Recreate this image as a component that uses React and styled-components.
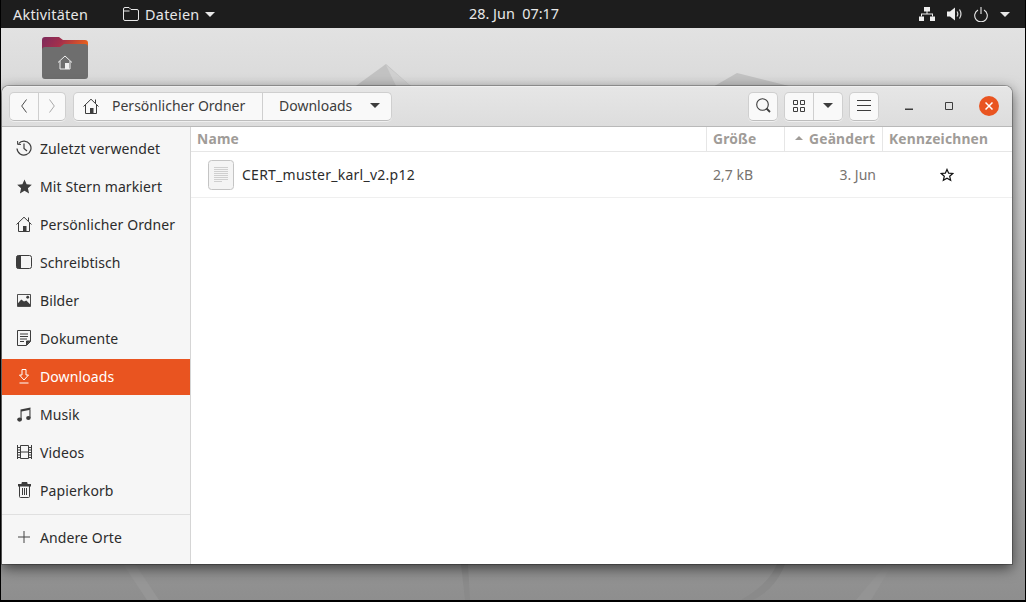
import React from 'react';
import styled, { createGlobalStyle } from 'styled-components';

const GlobalStyle = createGlobalStyle`
  html, body {
    margin: 0;
    padding: 0;
    background: #000;
  }
  * {
    box-sizing: border-box;
  }
  body {
    font-family: "Noto Sans", "Open Sans", sans-serif;
    overflow: hidden;
  }
`;

const Screen = styled.div`
  width: 1026px;
  height: 602px;
  display: flex;
  flex-direction: column;
  background: #000;
  padding: 0 1px 2px;
`;

const TopBar = styled.div`
  height: 28px;
  flex: none;
  display: flex;
  align-items: center;
  background: #1d1d1d;
  color: #e8e8e8;
  font-size: 14.4px;
  position: relative;
  padding: 0 15px 0 12px;
`;

const TopItem = styled.div`
  display: flex;
  align-items: center;
  gap: 6px;
  letter-spacing: 0.25px;
  margin-left: ${p => p.$ml || 0}px;
`;

const Clocks = styled.div`
  position: absolute;
  left: 468px;
  top: 0;
  height: 28px;
  line-height: 28px;
  white-space: pre;
`;

const Tray = styled.div`
  margin-left: auto;
  display: flex;
  align-items: center;
  gap: 12px;
`;

const Caret = styled.span`
  display: inline-block;
  width: 0;
  height: 0;
  border-left: ${p => p.$size || 5}px solid transparent;
  border-right: ${p => p.$size || 5}px solid transparent;
  border-top: ${p => p.$size || 5}px solid ${p => p.$color || 'currentColor'};
`;

const UpCaret = styled(Caret)`
  transform: rotate(180deg);
`;

const Desktop = styled.div`
  flex: 1;
  position: relative;
  overflow: hidden;
  background: linear-gradient(180deg, #e2e2e2 0%, #d9d9d9 11%, #b2b2b2 60%, #8e8e8e 100%);
`;

const Wallpaper = styled.svg`
  position: absolute;
  inset: 0;
  width: 100%;
  height: 100%;
`;

const DesktopIcon = styled.div`
  position: absolute;
  left: 41px;
  top: 9px;
  width: 46px;
  height: 42px;
`;

const Window = styled.div`
  position: absolute;
  left: 1px;
  top: 58px;
  width: 1010px;
  height: 478px;
  display: flex;
  flex-direction: column;
  border-radius: 7px 7px 0 0;
  overflow: hidden;
  background: #fff;
  box-shadow: 0 4px 14px rgba(0, 0, 0, 0.6), 0 0 0 1px rgba(0, 0, 0, 0.25);
`;

const HeaderBar = styled.div`
  height: 41px;
  flex: none;
  display: flex;
  align-items: center;
  padding: 0 0 1px 7px;
  background: linear-gradient(180deg, #e6e6e6, #dddddd);
  border-top: 1px solid #f0f0f0;
  border-bottom: 1px solid #b9b9b9;
`;

const ButtonGroup = styled.div`
  display: flex;
  height: 29px;
  margin-left: ${p => p.$ml || 0}px;
  background: #f9f9f9;
  border: 1px solid #cfcfcf;
  border-bottom-color: #bdbdbd;
  border-radius: 5px;
  box-shadow: 0 1px 0 rgba(255, 255, 255, 0.5);
`;

const GroupCell = styled.div`
  width: ${p => p.$w}px;
  display: flex;
  align-items: center;
  justify-content: ${p => p.$align || 'center'};
  gap: ${p => p.$gap || 0}px;
  padding-left: ${p => p.$pl || 0}px;
  padding-bottom: 1px;
  font-size: 14px;
  color: #3d3d3d;
  & + & {
    border-left: 1px solid #cfcfcf;
  }
`;

const WindowControl = styled.div`
  width: 20px;
  height: 20px;
  display: flex;
  align-items: center;
  justify-content: center;
  border-radius: 50%;
  margin-left: 20px;
  background: ${p => p.$close ? '#e95420' : 'transparent'};
`;

const Body = styled.div`
  flex: 1;
  display: flex;
  min-height: 0;
`;

const Sidebar = styled.nav`
  width: 189px;
  flex: none;
  display: flex;
  flex-direction: column;
  background: #f6f6f6;
  border-right: 1px solid #d5d5d5;
  padding-top: 2px;
`;

const Place = styled.div`
  height: ${p => p.$active ? 36 : 38}px;
  margin-top: ${p => p.$active ? 2 : 0}px;
  padding-bottom: ${p => p.$active ? 2 : 0}px;
  display: flex;
  align-items: center;
  gap: 8px;
  padding-left: 14px;
  font-size: 14px;
  letter-spacing: 0.1px;
  color: ${p => p.$active ? '#fff' : '#2c2c2c'};
  background: ${p => p.$active ? '#e95420' : 'transparent'};
`;

const PlaceIcon = styled.span`
  width: 16px;
  height: 18px;
  display: flex;
  align-items: center;
  justify-content: center;
`;

const SidebarRule = styled.div`
  height: 1px;
  background: #e0e0e0;
  margin-top: 5px;
  margin-bottom: 3px;
`;

const Content = styled.main`
  flex: 1;
  display: flex;
  flex-direction: column;
  min-width: 0;
  background: #fff;
`;

const COLUMNS = '515px 78px 98px 1fr';

const ColumnHeader = styled.div`
  height: 25px;
  flex: none;
  display: grid;
  grid-template-columns: ${COLUMNS};
  border-bottom: 1px solid #e6e6e6;
`;

const ColumnTitle = styled.div`
  display: flex;
  align-items: center;
  gap: 6px;
  padding: 0 0 2px ${p => p.$arrow ? 10 : 6}px;
  font-size: 13.8px;
  font-weight: 700;
  letter-spacing: 0.2px;
  color: #a09c98;
  white-space: nowrap;
  & + & {
    border-left: 1px solid #e6e6e6;
  }
`;

const FileRow = styled.div`
  height: 46px;
  flex: none;
  display: grid;
  grid-template-columns: ${COLUMNS};
  align-items: center;
  border-bottom: 1px solid #efefef;
  font-size: 14px;
`;

const FileName = styled.div`
  display: flex;
  align-items: center;
  gap: 8px;
  padding-left: 17px;
  letter-spacing: 0.25px;
  color: #2c2c2c;
`;

const FileMeta = styled.div`
  color: #77736f;
  padding: 0 6px 0 7px;
  text-align: ${p => p.$right ? 'right' : 'left'};
`;

const StarCell = styled.div`
  display: flex;
  justify-content: center;
  padding-right: 1px;
`;

const FileIcon = () => (
  <svg width="26" height="30" viewBox="0 0 26 30">
    <rect x="0.5" y="0.5" width="25" height="29" rx="3" fill="#f4f4f4" stroke="#c4c4c4" />
    <path d="M6 7.5h14M6 9.5h14M6 11.5h14M6 13.5h14M6 15.5h14M6 17.5h14M6 19.5h14M6 21.5h8" stroke="#cfcfcf" />
  </svg>
);

const FolderOutline = () => (
  <svg width="16" height="14" viewBox="0 0 16 14" fill="none" stroke="#e8e8e8">
    <path d="M2 0.5h4l2 2h6a1.5 1.5 0 0 1 1.5 1.5v8a1.5 1.5 0 0 1-1.5 1.5H2A1.5 1.5 0 0 1 0.5 12V2A1.5 1.5 0 0 1 2 0.5zM0.5 4h6" />
  </svg>
);

const NetworkIcon = () => (
  <svg width="16" height="14" viewBox="0 0 16 14" fill="#eee">
    <rect x="5" y="0" width="6" height="4.5" />
    <rect x="0" y="9.5" width="5" height="4.5" />
    <rect x="11" y="9.5" width="5" height="4.5" />
    <path d="M7.5 4h1v2.5h5.5v3h-1v-2H3v2H2v-3h5.5z" />
  </svg>
);

const VolumeIcon = () => (
  <svg width="15" height="14" viewBox="0 0 15 14">
    <path d="M0 4.5h3L8 0.5v13l-5-4H0z" fill="#eee" />
    <path d="M10 4.5c1 1.5 1 3.5 0 5M12.5 2.5c1.8 2.8 1.8 6.2 0 9" fill="none" stroke="#ddd" strokeWidth="1.2" />
  </svg>
);

const PowerIcon = () => (
  <svg width="14" height="15" viewBox="0 0 14 15" fill="none" stroke="#e8e8e8" strokeWidth="1.1">
    <path d="M4 3a6.3 6.3 0 1 0 6 0M7 0v7" />
  </svg>
);

const ClockIcon = () => (
  <svg width="16" height="16" viewBox="0 0 16 16" fill="none" stroke="#3d3d3d" strokeWidth="1.2">
    <path d="M2.6 3.6A7 7 0 1 1 1 8.5" />
    <path d="M1.6 1v3.4H5" strokeWidth="1" />
    <path d="M8 3.5V8.5l3 2.5" />
  </svg>
);

const StarIcon = () => (
  <svg width="15" height="15" viewBox="0 0 15 15" fill="#3d3d3d">
    <path d="M7.5 0.5l2.1 4.8 5.2 0.5-3.9 3.5 1.2 5.1-4.6-2.7-4.6 2.7 1.2-5.1L0.2 5.8l5.2-0.5z" />
  </svg>
);

const OutlineStar = () => (
  <svg width="14" height="14" viewBox="0 0 15 15" fill="none" stroke="#111" strokeWidth="1.3">
    <path d="M7.5 1.5l1.8 4 4.4 0.4-3.3 3 1 4.3-3.9-2.3-3.9 2.3 1-4.3-3.3-3 4.4-0.4z" />
  </svg>
);

const HomeIcon = () => (
  <svg width="16" height="16" viewBox="0 0 16 16" fill="none" stroke="#3d3d3d">
    <path d="M0.5 8.5L8 1.2l7.5 7.3M2.5 7v8.5h11V7M12.5 1.5v3.5" />
    <path d="M7 10h3.5v5.5H7z" fill="#3d3d3d" stroke="none" />
  </svg>
);

const DesktopPlaceIcon = () => (
  <svg width="16" height="14" viewBox="0 0 16 14">
    <rect x="0.5" y="0.5" width="15" height="13" rx="2" fill="none" stroke="#3d3d3d" />
    <path d="M2 0.5h3v13H2a1.5 1.5 0 0 1-1.5-1.5V2A1.5 1.5 0 0 1 2 0.5z" fill="#3d3d3d" />
  </svg>
);

const ImageIcon = () => (
  <svg width="14" height="13" viewBox="0 0 15 14">
    <path d="M0.5 0.5h14v13H0.5z" fill="none" stroke="#3d3d3d" />
    <path d="M1 13v-3l3.5-4 3 2 2.5-1 4 4v2z" fill="#3d3d3d" />
    <circle cx="11.5" cy="3.5" r="1.5" fill="#3d3d3d" />
  </svg>
);

const DocumentIcon = () => (
  <svg width="14" height="16" viewBox="0 0 14 16" fill="none" stroke="#3d3d3d">
    <path d="M0.5 0.5h13v11l-4 4h-9z" />
    <path d="M3 4h8M3 6.5h8M3 9h7M3 11.5h4" />
    <path d="M9.5 15v-4h4" fill="#3d3d3d" />
  </svg>
);

const DownloadIcon = () => (
  <svg width="10" height="15" viewBox="0 0 10 15" fill="none" stroke="#fff">
    <path d="M3 0.5h4v5.5h2.5l-4.5 5-4.5-5H3z" />
    <path d="M0.5 14h9" />
  </svg>
);

const MusicIcon = () => (
  <svg width="14" height="15" viewBox="0 0 14 15" fill="#3d3d3d">
    <path d="M3.5 2.5L13.5 0.5v2.2L4.6 4.5V12.5H3.5zM12.4 1.5h1.1v9.5h-1.1z" />
    <ellipse cx="2.6" cy="12.6" rx="2.4" ry="2.1" />
    <ellipse cx="11.4" cy="11" rx="2.3" ry="2.1" />
  </svg>
);

const FilmIcon = () => (
  <svg width="15" height="14" viewBox="0 0 15 14" fill="none" stroke="#3d3d3d">
    <path d="M3.5 0.5h8v13h-8zM3.5 7h8" />
    <path d="M0.5 0v14M14.5 0v14" strokeWidth="1" />
    <path d="M0 2.5h3M0 5h3M0 7.5h3M0 10h3M0 12.5h3M12 2.5h3M12 5h3M12 7.5h3M12 10h3M12 12.5h3" />
  </svg>
);

const TrashIcon = () => (
  <svg width="13" height="16" viewBox="0 0 13 16" fill="none" stroke="#3d3d3d">
    <path d="M1.5 3.5v11a1 1 0 0 0 1 1h8a1 1 0 0 0 1-1v-11" />
    <path d="M0 2.5h13v1.5H0zM4 2V0.5h5V2" fill="#3d3d3d" strokeWidth="1" />
    <path d="M4.5 6v7M6.5 6v7M8.5 6v7" />
  </svg>
);

const PlusIcon = () => (
  <svg width="12" height="12" viewBox="0 0 12 12" stroke="#444">
    <path d="M6 0v12M0 6h12" />
  </svg>
);

const BackIcon = ({ color }) => (
  <svg width="6" height="14" viewBox="0 0 6 14" fill="none" stroke={color}>
    <path d="M5.5 0.5L0.7 7l4.8 6.5" />
  </svg>
);

const ForwardIcon = ({ color }) => (
  <svg width="6" height="14" viewBox="0 0 6 14" fill="none" stroke={color}>
    <path d="M0.5 0.5L5.3 7l-4.8 6.5" />
  </svg>
);

const SearchIcon = () => (
  <svg width="15" height="15" viewBox="0 0 15 15" fill="none" stroke="#3d3d3d">
    <circle cx="6.5" cy="6.5" r="5.8" strokeWidth="1.1" />
    <path d="M10.5 10.5L14 14" strokeWidth="1.8" />
  </svg>
);

const GridIcon = () => (
  <svg width="12" height="12" viewBox="0 0 12 12" fill="none" stroke="#3d3d3d">
    <path d="M0.5 0.5h4v4h-4zM7.5 0.5h4v4h-4zM0.5 7.5h4v4h-4zM7.5 7.5h4v4h-4z" />
  </svg>
);

const MenuIcon = () => (
  <svg width="14" height="11" viewBox="0 0 14 11" stroke="#3d3d3d">
    <path d="M0 0.5h14M0 5.5h14M0 10.5h14" />
  </svg>
);

const MinimizeIcon = () => (
  <svg width="8" height="8" viewBox="0 0 8 8" stroke="#3d3d3d" strokeWidth="1.4">
    <path d="M0 7.3h8" />
  </svg>
);

const MaximizeIcon = () => (
  <svg width="8" height="8" viewBox="0 0 8 8" fill="none" stroke="#3d3d3d">
    <path d="M0.5 0.5h7v7h-7z" />
  </svg>
);

const CloseIcon = () => (
  <svg width="8" height="8" viewBox="0 0 8 8" stroke="#fff" strokeWidth="1.5">
    <path d="M0.5 0.5l7 7M7.5 0.5l-7 7" />
  </svg>
);

const HomeFolder = () => (
  <svg width="46" height="42" viewBox="0 0 46 42">
    <defs>
      <linearGradient id="tab" x1="0" x2="1" y1="0" y2="0.3">
        <stop offset="0" stopColor="#7c2a5c" />
        <stop offset="0.45" stopColor="#a32f4c" />
        <stop offset="1" stopColor="#e8601c" />
      </linearGradient>
    </defs>
    <path d="M3 0h14l4 3h22a3 3 0 0 1 3 3v12H0V3a3 3 0 0 1 3-3z" fill="url(#tab)" />
    <path d="M3 10h15l4-3h21a3 3 0 0 1 3 3v29a3 3 0 0 1-3 3H3a3 3 0 0 1-3-3V13a3 3 0 0 1 3-3z" fill="#6e6e6e" />
    <path d="M16 25.5l7-6.5 7 6.5M18 24v8h10v-8" fill="none" stroke="#f0f0f0" />
    <rect x="23" y="26" width="4" height="6" fill="#f0f0f0" />
  </svg>
);

const places = [
  { label: 'Zuletzt verwendet', icon: <ClockIcon /> },
  { label: 'Mit Stern markiert', icon: <StarIcon /> },
  { label: 'Persönlicher Ordner', icon: <HomeIcon /> },
  { label: 'Schreibtisch', icon: <DesktopPlaceIcon /> },
  { label: 'Bilder', icon: <ImageIcon /> },
  { label: 'Dokumente', icon: <DocumentIcon /> },
  { label: 'Downloads', icon: <DownloadIcon />, active: true },
  { label: 'Musik', icon: <MusicIcon /> },
  { label: 'Videos', icon: <FilmIcon /> },
  { label: 'Papierkorb', icon: <TrashIcon /> },
];

export default function App() {
  return (
    <>
      <GlobalStyle />
      <Screen>
        <TopBar>
          <TopItem>Aktivitäten</TopItem>
          <TopItem $ml={35}>
            <FolderOutline />
            Dateien
            <Caret />
          </TopItem>
          <Clocks>28. Jun  07:17</Clocks>
          <Tray>
            <NetworkIcon />
            <VolumeIcon />
            <PowerIcon />
            <Caret />
          </Tray>
        </TopBar>
        <Desktop>
          <Wallpaper viewBox="0 0 1024 572" preserveAspectRatio="none">
            <path d="M352 60L385 36L412 60z" fill="#c2c2c2" />
            <path d="M385 37L412 60H396z" fill="#d0d0d0" />
            <path d="M710 60L736 45L796 60z" fill="#c2c2c2" />
            <path d="M122 536L146 572H158L134 536z" fill="#969696" />
            <path d="M460 536L464 572H469L467 536z" fill="#8a8a8a" />
            <path d="M740 572C760 560 770 550 776 536H784C778 552 768 564 752 572z" fill="#8a8a8a" />
            <path d="M855 572L885 536H892L870 572z" fill="#949494" />
          </Wallpaper>
          <DesktopIcon>
            <HomeFolder />
          </DesktopIcon>
          <Window>
            <HeaderBar>
              <ButtonGroup>
                <GroupCell $w={28}>
                  <BackIcon color="#4a4a4a" />
                </GroupCell>
                <GroupCell $w={27}>
                  <ForwardIcon color="#a8a8a8" />
                </GroupCell>
              </ButtonGroup>
              <ButtonGroup $ml={7}>
                <GroupCell $w={188} $align="flex-start" $pl={9} $gap={13}>
                  <HomeIcon />
                  Persönlicher Ordner
                </GroupCell>
                <GroupCell $w={129} $align="flex-start" $pl={16} $gap={18}>
                  Downloads
                  <Caret />
                </GroupCell>
              </ButtonGroup>
              <ButtonGroup $ml={356}>
                <GroupCell $w={28}>
                  <SearchIcon />
                </GroupCell>
              </ButtonGroup>
              <ButtonGroup $ml={6}>
                <GroupCell $w={28}>
                  <GridIcon />
                </GroupCell>
                <GroupCell $w={29}>
                  <Caret />
                </GroupCell>
              </ButtonGroup>
              <ButtonGroup $ml={6}>
                <GroupCell $w={28}>
                  <MenuIcon />
                </GroupCell>
              </ButtonGroup>
              <WindowControl>
                <MinimizeIcon />
              </WindowControl>
              <WindowControl>
                <MaximizeIcon />
              </WindowControl>
              <WindowControl $close>
                <CloseIcon />
              </WindowControl>
            </HeaderBar>
            <Body>
              <Sidebar>
                {places.map(place => (
                  <Place key={place.label} $active={place.active}>
                    <PlaceIcon>{place.icon}</PlaceIcon>
                    {place.label}
                  </Place>
                ))}
                <SidebarRule />
                <Place>
                  <PlaceIcon>
                    <PlusIcon />
                  </PlaceIcon>
                  Andere Orte
                </Place>
              </Sidebar>
              <Content>
                <ColumnHeader>
                  <ColumnTitle>Name</ColumnTitle>
                  <ColumnTitle>Größe</ColumnTitle>
                  <ColumnTitle $arrow>
                    <UpCaret $size={4} $color="#a09c98" />
                    Geändert
                  </ColumnTitle>
                  <ColumnTitle>Kennzeichnen</ColumnTitle>
                </ColumnHeader>
                <FileRow>
                  <FileName>
                    <FileIcon />
                    CERT_muster_karl_v2.p12
                  </FileName>
                  <FileMeta>2,7 kB</FileMeta>
                  <FileMeta $right>3. Jun</FileMeta>
                  <StarCell>
                    <OutlineStar />
                  </StarCell>
                </FileRow>
              </Content>
            </Body>
          </Window>
        </Desktop>
      </Screen>
    </>
  );
}
